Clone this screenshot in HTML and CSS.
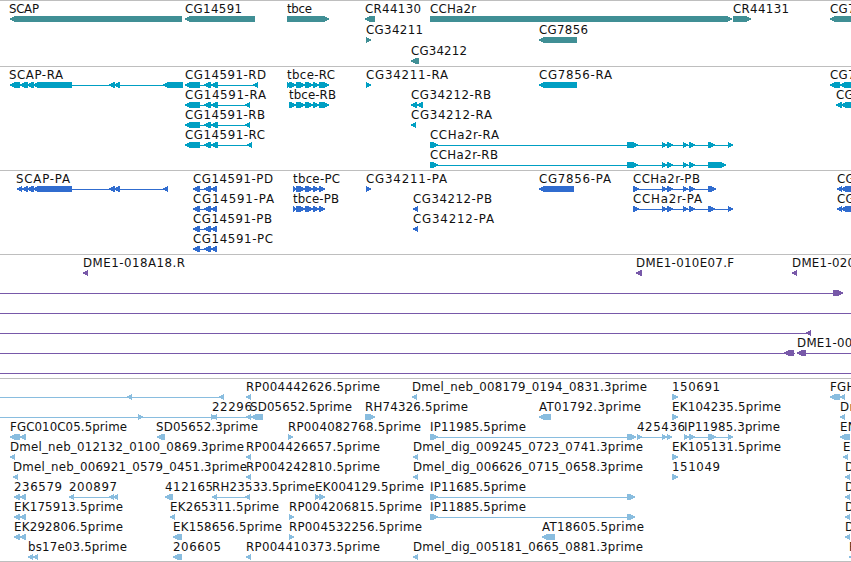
FILE: index.html
```html
<!DOCTYPE html>
<html lang="en">
<head>
  <meta charset="UTF-8">
  <meta name="viewport" content="width=device-width, initial-scale=1.0">
  <title>Genome Browser</title>
  <link rel="stylesheet" href="styles.css">
</head>
<body>
  <main class="browser">
    <section class="track genes" data-track="genes"></section>
    <section class="track transcripts" data-track="transcripts"></section>
    <section class="track proteins" data-track="proteins"></section>
    <section class="track clones" data-track="clones"></section>
    <section class="track ests" data-track="ests"></section>
  </main>

  <script src="tracks.js"></script>
</body>
</html>
```

FILE: styles.css
```css
body {
  margin: 0;
  background: white;
  color: black;
  font-family: 'DejaVu Sans', sans-serif;
  overflow: hidden;
}

.browser {
  display: flex;
  flex-direction: column;
  width: 851px;
  border-bottom: 1px solid #bebebe;
}

.track {
  box-sizing: border-box;
  display: flex;
  flex-direction: column;
  border-top: 1px solid #bebebe;
}

.row {
  display: block;
  flex: none;
  width: 851px;
  height: 20px;
  overflow: visible;
}

.label {
  fill: #111;
  font-size: 11.8px;
}

.clipped {
  letter-spacing: 0.3px;
}

.exon,
.intron {
  fill: currentColor;
  shape-rendering: crispEdges;
}

.genes {
  height: 66px;
  color: #408f95;
}

.genes .row {
  height: 21px;
}

.transcripts {
  height: 104px;
  color: #009fc3;
}

.proteins {
  height: 84px;
  color: #306ccf;
}

.clones {
  height: 124px;
  color: #7859a9;
}

.ests {
  height: 183px;
  color: #89bddf;
}
```

FILE: tracks.js
```javascript
const SVG = 'http://www.w3.org/2000/svg';

// feature: [label, label start, label end, strand, exons, line start, line end]
// a label end of 0 means the label runs off the view
const rd = [[185, 200], [204, 211], [211, 218]];
const pd = [[193, 200], [204, 211], [211, 217]];
const tb = [[296, 305], [305, 313], [313, 319]];
const cc = [[662, 667], [667, 673], [683, 688], [689, 695]];
const ip = [[430, 438], [627, 635]];

const tracks = {
  genes: [
    [
      ['SCAP', 9, 39, '-', [[10, 182]]],
      ['CG14591', 185, 242, '-', [[185, 255]]],
      ['tbce', 287, 312, '+', [[287, 329]]],
      ['CR44130', 365, 421, '-', [[365, 375]]],
      ['CCHa2r', 430, 476, '+', [[430, 732]]],
      ['CR44131', 733, 789, '+', [[733, 751]]],
      ['CG7', 830, 0, '-', [[830, 860]]]
    ],
    [
      ['CG34211', 366, 423, '+', [[366, 371]]],
      ['CG7856', 539, 588, '-', [[539, 577]]]
    ],
    [
      ['CG34212', 411, 467, '-', [[411, 419]]]
    ]
  ],

  transcripts: [
    [
      ['SCAP-RA', 9, 63, '-', [[10, 20], [20, 28], [27, 34], [33, 72], [109, 115], [114, 120], [163, 183]]],
      ['CG14591-RD', 185, 266, '-', [...rd, [253, 258]]],
      ['tbce-RC', 287, 335, '+', [[287, 291], [289, 296], ...tb, [319, 329]]],
      ['CG34211-RA', 366, 448, '+', [[366, 371]]],
      ['CG7856-RA', 539, 612, '-', [[539, 577]]],
      ['CG7', 830, 0, '-', [[830, 840], [840, 860]]]
    ],
    [
      ['CG14591-RA', 185, 266, '-', [...rd, [245, 250]]],
      ['tbce-RB', 289, 336, '+', [[289, 296], ...tb, [319, 329]]],
      ['CG34212-RB', 411, 491, '-', [[411, 417], [417, 423]]],
      ['CG', 836, 0, '-', [[836, 842], [841, 860]]]
    ],
    [
      ['CG14591-RB', 185, 265, '-', [...rd, [245, 250]]],
      ['CG34212-RA', 411, 492, '-', [[411, 416]]]
    ],
    [
      ['CG14591-RC', 185, 265, '-', [...rd, [247, 252]]],
      ['CCHa2r-RA', 430, 499, '+', [[430, 438], [627, 638], ...cc, [708, 715], [728, 733]]]
    ],
    [
      ['CCHa2r-RB', 430, 498, '+', [[430, 438], [627, 638], ...cc, [708, 726]]]
    ]
  ],

  proteins: [
    [
      ['SCAP-PA', 16, 70, '-', [[17, 22], [22, 28], [27, 34], [33, 72], [109, 115], [114, 120], [163, 168]]],
      ['CG14591-PD', 193, 273, '-', pd],
      ['tbce-PC', 293, 340, '+', [[293, 297], ...tb, [319, 325]]],
      ['CG34211-PA', 366, 447, '+', [[366, 371]]],
      ['CG7856-PA', 539, 611, '-', [[539, 574]]],
      ['CCHa2r-PB', 633, 700, '+', [[633, 639], ...cc, [708, 716]]],
      ['CG', 837, 0, '-', [[837, 842], [841, 860]]]
    ],
    [
      ['CG14591-PA', 193, 274, '-', pd],
      ['tbce-PB', 293, 339, '+', [[293, 297], ...tb, [319, 325]]],
      ['CG34212-PB', 413, 492, '-', [[413, 418]]],
      ['CCHa2r-PA', 633, 702, '+', [[633, 639], ...cc, [708, 715], [728, 733]]],
      ['CG', 837, 0, '-', [[837, 842], [841, 860]]]
    ],
    [
      ['CG14591-PB', 193, 272, '-', pd],
      ['CG34212-PA', 413, 494, '-', [[413, 418]]]
    ],
    [
      ['CG14591-PC', 193, 273, '-', pd]
    ]
  ],

  clones: [
    [
      ['DME1-018A18.R', 83, 185, '-', [[83, 88]]],
      ['DME1-010E07.F', 636, 734, '-', [[636, 642]]],
      ['DME1-020', 792, 0, '-', [[792, 797]]]
    ],
    [['', 0, 0, '+', [[833, 843]], 0, 843]],
    [['', 0, 0, '+', [], 0, 851]],
    [['', 0, 0, '-', [[806, 811]], 0, 811]],
    [
      ['', 0, 0, '-', [[784, 794]], 0, 795],
      ['DME1-00', 797, 0, '-', [[797, 806]], 797, 851]
    ],
    [['', 0, 0, '+', [], 0, 851]]
  ],

  ests: [
    [
      ['', 0, 0, '-', [[127, 132], [219, 224]], 0, 224],
      ['RP004442626.5prime', 246, 380, '-', [[246, 251]]],
      ['Dmel_neb_008179_0194_0831.3prime', 412, 647, '-', [[412, 417]]],
      ['150691', 672, 720, '+', [[672, 678]]],
      ['FGH', 830, 0, '-', [[830, 840], [840, 845]]]
    ],
    [
      ['', 0, 0, '+', [[138, 143], [211, 216]], 0, 216],
      ['22296', 212, 252, '-', [[212, 217], [246, 251]]],
      ['SD05652.5prime', 250, 352, '-', [[251, 263]]],
      ['RH74326.5prime', 365, 468, '+', [[365, 375]]],
      ['AT01792.3prime', 539, 641, '-', [[539, 551]]],
      ['EK104235.5prime', 672, 781, '+', [[672, 678]]],
      ['Dm', 840, 0, '-', [[840, 845]]]
    ],
    [
      ['FGC010C05.5prime', 10, 127, '-', [[10, 20], [20, 26]]],
      ['SD05652.3prime', 156, 258, '-', [[157, 165]]],
      ['RP004082768.5prime', 288, 421, '+', [[288, 293]]],
      ['IP11985.5prime', 430, 526, '+', [[430, 438], [627, 636]]],
      ['425436', 637, 685, '+', [[637, 642], [662, 667], [667, 672]]],
      ['IP11985.3prime', 684, 780, '+', [[684, 689], [689, 695], [708, 716], [728, 733]]],
      ['EN', 840, 0, '-', [[840, 850]]]
    ],
    [
      ['Dmel_neb_012132_0100_0869.3prime', 10, 244, '-', [[10, 15]]],
      ['RP004426657.5prime', 246, 380, '-', [[246, 251]]],
      ['Dmel_dig_009245_0723_0741.3prime', 413, 643, '-', [[413, 418]]],
      ['EK105131.5prime', 672, 781, '+', [[672, 678]]],
      ['E', 843, 0, '-', [[843, 848]]]
    ],
    [
      ['Dmel_neb_006921_0579_0451.3prime', 13, 247, '-', [[13, 18]]],
      ['RP004242810.5prime', 246, 380, '-', [[246, 251]]],
      ['Dmel_dig_006626_0715_0658.3prime', 413, 643, '-', [[413, 418]]],
      ['151049', 672, 720, '+', [[672, 678]]],
      ['D', 845, 0, '-', [[845, 850]]]
    ],
    [
      ['236579', 14, 62, '-', [[14, 20], [20, 26]]],
      ['200897', 69, 117, '-', [[69, 74], [109, 114], [113, 118]]],
      ['412165', 165, 213, '-', [[165, 173]]],
      ['RH23533.5prime', 212, 315, '-', [[212, 217], [245, 250]]],
      ['EK004129.5prime', 315, 424, '+', [[315, 320], [319, 325]]],
      ['IP11685.5prime', 430, 526, '+', ip],
      ['D', 845, 0, '-', [[845, 850]]]
    ],
    [
      ['EK175913.5prime', 14, 123, '-', [[14, 20], [20, 26]]],
      ['EK265311.5prime', 170, 279, '-', [[170, 175]]],
      ['RP004206815.5prime', 289, 422, '+', [[289, 294]]],
      ['IP11885.5prime', 430, 526, '+', ip],
      ['D', 845, 0, '-', [[845, 850]]]
    ],
    [
      ['EK292806.5prime', 14, 123, '-', [[14, 20], [20, 26]]],
      ['EK158656.5prime', 173, 282, '-', [[173, 182]]],
      ['RP004532256.5prime', 289, 422, '+', [[289, 294]]],
      ['AT18605.5prime', 542, 644, '-', [[542, 555]]],
      ['D', 845, 0, '-', [[845, 850]]]
    ],
    [
      ['bs17e03.5prime', 28, 127, '-', [[28, 33], [33, 38]]],
      ['206605', 173, 221, '-', [[173, 182]]],
      ['RP004410373.5prime', 246, 380, '-', [[246, 251]]],
      ['Dmel_dig_005181_0665_0881.3prime', 413, 643, '-', [[413, 418]]],
      ['F', 849, 0, '-', [[849, 855]]]
    ]
  ]
};

function add(parent, name, attrs) {
  const el = document.createElementNS(SVG, name);
  for (const key in attrs) el.setAttribute(key, attrs[key]);
  parent.appendChild(el);
  return el;
}

function drawExon(row, start, end, strand) {
  const head = Math.min(5, end - start);
  const points = strand === '+'
    ? `${start},15 ${end - head},15 ${end},17.5 ${end},18.5 ${end - head},21 ${start},21`
    : `${end},15 ${start + head},15 ${start},17.5 ${start},18.5 ${start + head},21 ${end},21`;
  add(row, 'polygon', { class: 'exon', points });
}

function drawFeature(row, [label, x, labelEnd, strand, exons, from, to]) {
  if (from === undefined) {
    from = exons[0][0];
    to = exons[exons.length - 1][1];
  }
  if (exons.length !== 1 || to - from > exons[0][1] - exons[0][0]) {
    add(row, 'rect', { class: 'intron', x: from, y: 18, width: to - from, height: 1 });
  }
  exons.forEach(([start, end]) => drawExon(row, start, end, strand));

  if (label) {
    const text = add(row, 'text', { class: labelEnd ? 'label' : 'label clipped', x, y: 12 });
    if (labelEnd) text.setAttribute('textLength', labelEnd - x);
    text.textContent = label;
  }
}

document.querySelectorAll('.track').forEach(track => {
  tracks[track.dataset.track].forEach(features => {
    const row = add(track, 'svg', { class: 'row' });
    features.forEach(feature => drawFeature(row, feature));
  });
});
```
